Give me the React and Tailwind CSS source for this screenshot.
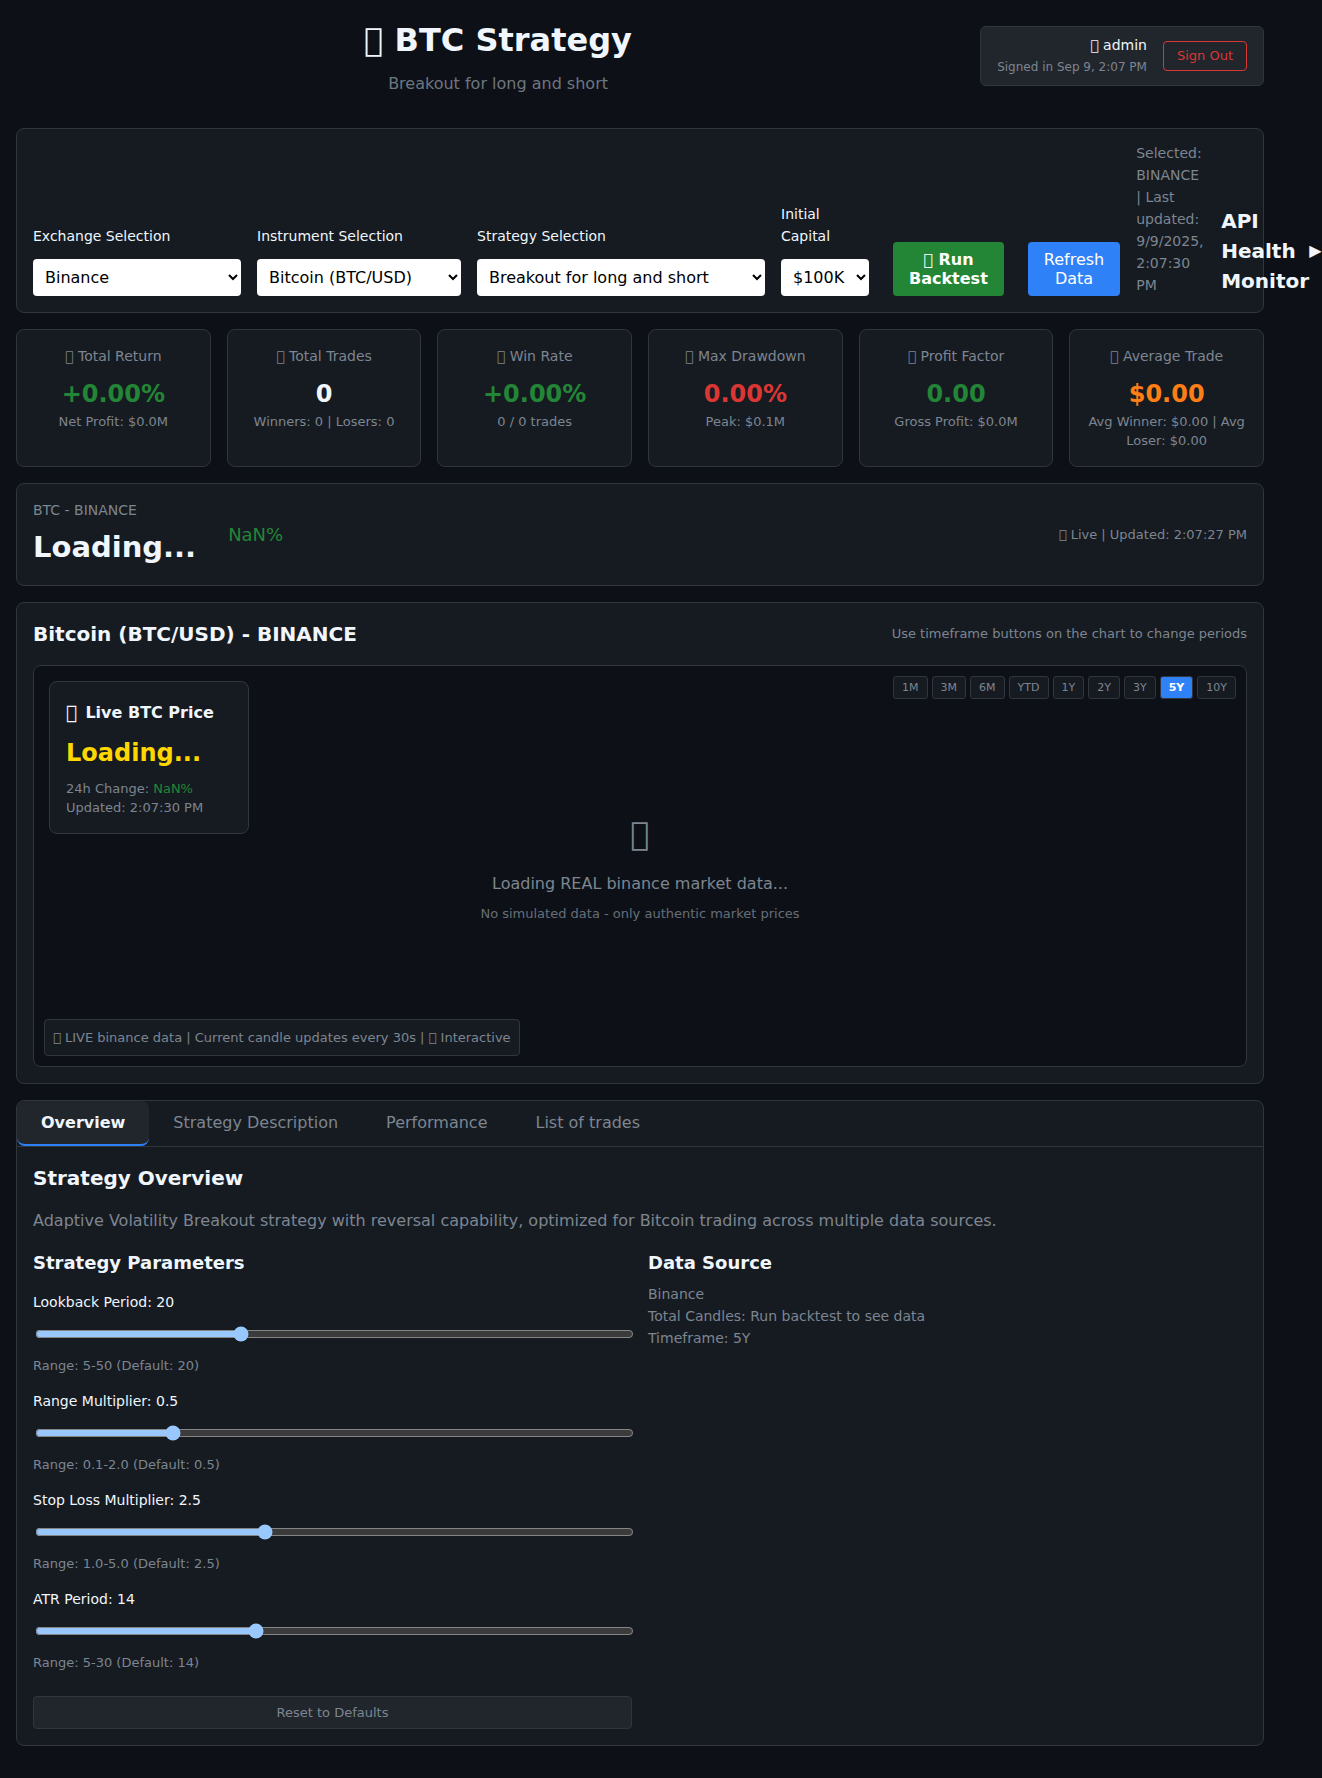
import { useState } from "react";

const panel = "rounded-lg border border-[#30363d] bg-[#161b22]";

// Private-use glyph placed before headings and status texts.
const glyph = "\u{F0000}";

const stats = [
  { label: "Total Return", value: "+0.00%", note: "Net Profit: $0.0M", tone: "text-[#238636]" },
  { label: "Total Trades", value: "0", note: "Winners: 0 | Losers: 0", tone: "text-[#f0f6fc]" },
  { label: "Win Rate", value: "+0.00%", note: "0 / 0 trades", tone: "text-[#238636]" },
  { label: "Max Drawdown", value: "0.00%", note: "Peak: $0.1M", tone: "text-[#da3633]" },
  { label: "Profit Factor", value: "0.00", note: "Gross Profit: $0.0M", tone: "text-[#238636]" },
  { label: "Average Trade", value: "$0.00", note: "Avg Winner: $0.00 | Avg Loser: $0.00", tone: "text-[#fd7e14]" },
];

const timeframes = ["1M", "3M", "6M", "YTD", "1Y", "2Y", "3Y", "5Y", "10Y"];

const tabs = ["Overview", "Strategy Description", "Performance", "List of trades"];

const parameters = [
  { id: "lookback", label: "Lookback Period", min: 5, max: 50, step: 1, initial: 20, range: "5-50" },
  { id: "multiplier", label: "Range Multiplier", min: 0.1, max: 2, step: 0.1, initial: 0.5, range: "0.1-2.0" },
  { id: "stop-loss", label: "Stop Loss Multiplier", min: 1, max: 5, step: 0.1, initial: 2.5, range: "1.0-5.0" },
  { id: "atr", label: "ATR Period", min: 5, max: 30, step: 1, initial: 14, range: "5-30" },
];

const defaults = Object.fromEntries(parameters.map((p) => [p.id, p.initial]));

function SelectField({ id, label, options, width }) {
  return (
    <div className={`flex shrink-0 flex-col ${width}`}>
      <label htmlFor={id} className="mb-3 text-[14px] leading-[22px]">
        {label}
      </label>
      <select id={id} className="h-[37px] w-full rounded bg-white px-2 text-base text-black scheme-light">
        {options.map((o) => (
          <option key={o}>{o}</option>
        ))}
      </select>
    </div>
  );
}

function Header() {
  return (
    <header className="mb-8 flex items-center justify-between">
      <div className="flex-1 text-center">
        <h1 className="mb-2 text-[32px] leading-[48px] font-bold">{glyph} BTC Strategy</h1>
        <p className="text-base leading-6 text-[#6e7681]">Breakout for long and short</p>
      </div>
      <div className="flex items-center gap-4 rounded-md border border-[#30363d] bg-[#21262d] px-4 py-2">
        <div className="text-right">
          <div className="mb-0.5 text-[14px] leading-5">{glyph} admin</div>
          <div className="text-[12px] leading-5 text-[#7d8590]">Signed in Sep 9, 2:07 PM</div>
        </div>
        <button className="rounded border border-[#da3633] px-[13px] py-[6px] text-[13px] leading-4 text-[#da3633]">
          Sign Out
        </button>
      </div>
    </header>
  );
}

function Controls() {
  return (
    <section className={`${panel} mb-4 flex items-end gap-4 px-4 pt-[13px] pb-4`}>
      <SelectField id="exchange" label="Exchange Selection" options={["Binance"]} width="w-52" />
      <SelectField id="instrument" label="Instrument Selection" options={["Bitcoin (BTC/USD)"]} width="w-[204px]" />
      <SelectField id="strategy" label="Strategy Selection" options={["Breakout for long and short"]} width="w-72" />
      <SelectField id="capital" label="Initial Capital" options={["$100K"]} width="w-[88px]" />
      <button className="ml-2 shrink-0 rounded bg-[#238636] px-4 py-2 text-base leading-[19px] font-bold text-white">
        {glyph} Run
        <br />
        Backtest
      </button>
      <button className="ml-2 shrink-0 rounded bg-[#2f81f7] px-4 py-2 text-base leading-[19px] text-white">
        Refresh
        <br />
        Data
      </button>
      <p className="w-[69px] shrink-0 text-[14px] leading-[22px] text-[#7d8590]">
        Selected: BINANCE | Last updated: 9/9/2025, 2:07:30 PM
      </p>
      <button className="flex shrink-0 items-center text-left">
        <span className="w-[88px] text-xl leading-[30px] font-bold">API Health Monitor</span>
        <span className="text-base">▶</span>
      </button>
    </section>
  );
}

function Stats() {
  return (
    <section className="mb-4 grid grid-cols-6 gap-4">
      {stats.map((s) => (
        <div key={s.label} className={`${panel} p-4 text-center`}>
          <div className="mb-2.5 text-[14px] leading-5 text-[#7d8590]">
            {glyph} {s.label}
          </div>
          <div className={`text-2xl leading-9 font-bold ${s.tone}`}>{s.value}</div>
          <div className="text-[13px] leading-[19px] text-[#7d8590]">{s.note}</div>
        </div>
      ))}
    </section>
  );
}

function PriceBar() {
  return (
    <section className={`${panel} mb-4 flex items-center justify-between p-4`}>
      <div className="flex items-center gap-8">
        <div>
          <div className="mb-1.5 text-[14px] leading-5 text-[#7d8590]">BTC - BINANCE</div>
          <div className="text-[29px] leading-[43px] font-bold">Loading...</div>
        </div>
        <div className="text-lg leading-7 text-[#238636]">NaN%</div>
      </div>
      <div className="text-[13px] leading-[19px] text-[#7d8590]">{glyph} Live | Updated: 2:07:27 PM</div>
    </section>
  );
}

function Chart() {
  const [active, setActive] = useState("5Y");
  return (
    <section className={`${panel} mb-4 p-4`}>
      <div className="mb-4 flex items-center justify-between">
        <h2 className="text-xl leading-[30px] font-bold">Bitcoin (BTC/USD) - BINANCE</h2>
        <span className="text-[13px] leading-5 text-[#7d8590]">
          Use timeframe buttons on the chart to change periods
        </span>
      </div>
      <div className="relative flex h-[402px] items-center justify-center rounded-lg border border-[#30363d] bg-[#0d1117]">
        <div className={`${panel} absolute top-[15px] left-[15px] w-[200px] p-4`}>
          <div className="mb-2 flex items-center gap-2 leading-[29px]">
            <span className="text-[19px]">{glyph}</span>
            <span className="text-base leading-[29px] font-bold">Live BTC Price</span>
          </div>
          <div className="mb-2 text-2xl leading-9 font-bold text-[#ffd700]">Loading...</div>
          <div className="text-[13px] leading-[19px] text-[#7d8590]">
            24h Change: <span className="text-[#238636]">NaN%</span>
          </div>
          <div className="text-[13px] leading-[19px] text-[#7d8590]">Updated: 2:07:30 PM</div>
        </div>
        <div className="absolute top-[10px] right-[10px] flex gap-1">
          {timeframes.map((t) => (
            <button
              key={t}
              onClick={() => setActive(t)}
              className={`rounded-[3px] border border-[#30363d] px-2 py-1 text-[11px] leading-[13px] ${
                t === active ? "bg-[#2f81f7] font-bold text-white" : "bg-[#161b22] text-[#7d8590]"
              }`}
            >
              {t}
            </button>
          ))}
        </div>
        <div className="text-center text-[#7d8590]">
          <div className="mb-[14px] text-[32px] leading-[48px]">{glyph}</div>
          <div className="mb-2 text-base leading-6">Loading REAL binance market data...</div>
          <div className="text-[13px] leading-[19px] opacity-80">
            No simulated data - only authentic market prices
          </div>
        </div>
        <div className="absolute bottom-[10px] left-[10px] rounded border border-[#30363d] bg-[#161b22] p-2 text-[13px] leading-[19px] text-[#7d8590]">
          {glyph} LIVE binance data | Current candle updates every 30s | {glyph} Interactive
        </div>
      </div>
    </section>
  );
}

function Details() {
  const [tab, setTab] = useState("Overview");
  const [values, setValues] = useState(defaults);
  return (
    <section className={panel}>
      <div className="flex border-b border-[#30363d]" role="tablist">
        {tabs.map((t) => (
          <button
            key={t}
            role="tab"
            aria-selected={t === tab}
            onClick={() => setTab(t)}
            className={`rounded-lg border-b-2 px-6 py-3 text-base leading-[19px] ${
              t === tab
                ? "border-[#2f81f7] bg-[#21262d] font-bold text-[#f0f6fc]"
                : "border-transparent text-[#7d8590]"
            }`}
          >
            {t}
          </button>
        ))}
      </div>
      <div className="p-4">
        <h2 className="mb-4 text-xl leading-[30px] font-bold">Strategy Overview</h2>
        <p className="mb-4 text-base leading-6 text-[#7d8590]">
          Adaptive Volatility Breakout strategy with reversal capability, optimized for Bitcoin trading across multiple
          data sources.
        </p>
        <div className="grid grid-cols-2 gap-4">
          <div>
            <h3 className="mb-3.5 text-lg leading-7 font-bold">Strategy Parameters</h3>
            {parameters.map((p) => (
              <div key={p.id} className="mb-[15px]">
                <label htmlFor={p.id} className="mb-[5px] block text-[14px] leading-[22px]">
                  {p.label}: {values[p.id]}
                </label>
                <input
                  id={p.id}
                  type="range"
                  min={p.min}
                  max={p.max}
                  step={p.step}
                  value={values[p.id]}
                  onChange={(e) => setValues({ ...values, [p.id]: Number(e.target.value) })}
                  className="m-[2px] block w-full px-3 py-2 scheme-dark"
                />
                <div className="mt-1.5 text-[13px] leading-[19px] text-[#7d8590]">
                  Range: {p.range} (Default: {p.initial})
                </div>
              </div>
            ))}
            <button
              onClick={() => setValues(defaults)}
              className="mt-6 block w-full rounded border border-[#30363d] bg-[#21262d] p-2 text-[13px] leading-[15px] text-[#7d8590]"
            >
              Reset to Defaults
            </button>
          </div>
          <div>
            <h3 className="mb-1.5 text-lg leading-7 font-bold">Data Source</h3>
            <div className="text-[14px] leading-[22px] text-[#7d8590]">
              <p>Binance</p>
              <p>Total Candles: Run backtest to see data</p>
              <p>Timeframe: 5Y</p>
            </div>
          </div>
        </div>
      </div>
    </section>
  );
}

export default function App() {
  return (
    <div className="min-h-screen bg-[#0d1117] font-['DejaVu_Sans',sans-serif] text-[#f0f6fc]">
      <main className="max-w-7xl p-4">
        <Header />
        <Controls />
        <Stats />
        <PriceBar />
        <Chart />
        <Details />
      </main>
    </div>
  );
}
